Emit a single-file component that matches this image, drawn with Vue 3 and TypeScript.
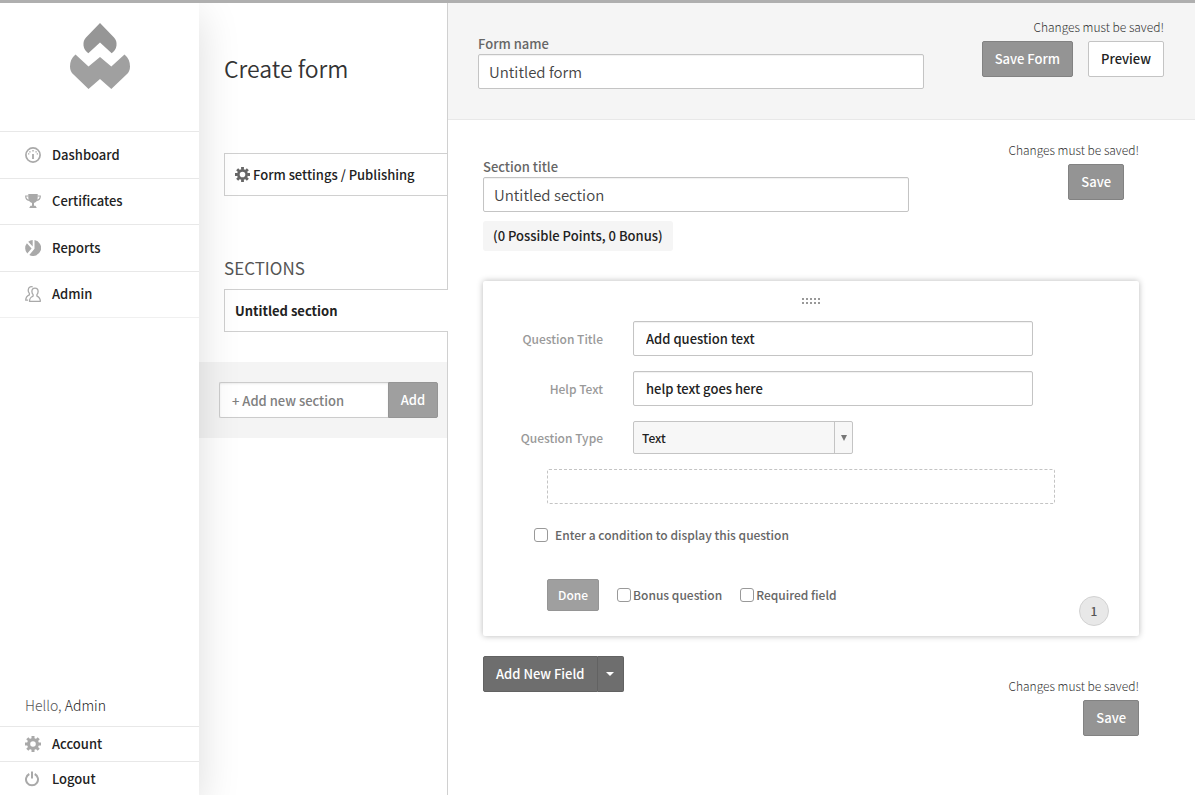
<script setup lang="ts">
import { ref } from 'vue'

interface NavItem {
  label: string
  icon: 'gauge' | 'trophy' | 'pie' | 'users'
}

const navItems: NavItem[] = [
  { label: 'Dashboard', icon: 'gauge' },
  { label: 'Certificates', icon: 'trophy' },
  { label: 'Reports', icon: 'pie' },
  { label: 'Admin', icon: 'users' },
]

const formName = ref('Untitled form')
const sectionTitle = ref('Untitled section')
const newSection = ref('')
const questionTitle = ref('Add question text')
const helpText = ref('help text goes here')
const questionType = ref('Text')
const questionTypes: string[] = ['Text', 'Number', 'Date', 'Dropdown']
const hasCondition = ref(false)
const isBonus = ref(false)
const isRequired = ref(false)
</script>

<template>
  <div class="page">
    <aside class="sidebar">
      <div class="brand">
        <svg class="logo" viewBox="0 0 60 66" aria-label="Home" role="img">
          <path fill="#969696" d="M30 0 44 14.5Q47 17.500 46.500 22.500Q46 27 41.700 30.300L30 19.500 18.300 30.300Q14 27 13.500 22.500Q13 17.500 16 14.500Z" />
          <path fill="#a0a0a0" d="M5.500 31.500 18.500 43.500 30 34 41.300 43.500 54.500 31.500Q60 36 60 43.500Q60 48.500 56.500 51.500L41.300 66 30 56 18.500 66 3.500 51.500Q0 48.500 0 43.500Q0 36 5.500 31.500Z" />
        </svg>
      </div>
      <nav class="nav">
        <a v-for="item in navItems" :key="item.label" href="#" class="nav-link">
          <svg class="icon" viewBox="0 0 16 16" aria-hidden="true">
            <template v-if="item.icon === 'gauge'">
              <circle cx="8" cy="8" r="7.100" fill="none" stroke="currentColor" stroke-width="1.700" />
              <path fill="currentColor" d="M7.100 7h1.800v5H7.100zM7.300 3h1.400v1.500H7.300zM4.200 4.200h1.400v1.400H4.200zM10.400 4.200h1.400v1.400h-1.400zM3 6.300h1.300v1.300H3zM11.700 6.300H13v1.300h-1.300z" />
            </template>
            <template v-else-if="item.icon === 'trophy'">
              <path fill="currentColor" d="M3.300 1h9.400v3.500c0 3.300-1.500 4.800-3.700 5.500v2.800h1.500l1.300 2.200H4.200l1.300-2.200H7V10C4.800 9.300 3.300 7.800 3.300 4.500z" />
              <path fill="none" stroke="currentColor" stroke-width="1.200" d="M3.500 3H.700c0 2.700 1.300 4 3.500 4.300M12.500 3h2.800c0 2.700-1.300 4-3.500 4.300" />
            </template>
            <template v-else-if="item.icon === 'pie'">
              <path fill="currentColor" d="M9.500.100A8 8 0 1 1 4.300 15L9.500 8.800zM7.700 0v6.500L3.200 1.700A8 8 0 0 1 7.700 0zM1.900 3.200 6.600 8.600 2.300 13.600A8 8 0 0 1 1.900 3.200z" />
            </template>
            <template v-else>
              <path fill="none" stroke="currentColor" stroke-width="1.300" stroke-linejoin="round" d="M10 2.100c-2 0-3.100 1.400-3.100 3.400 0 1.300.500 2.400 1.200 3.100v1.500c-2.300.900-3.400 1.600-3.600 5.200h10.900c-.200-3.600-1.300-4.300-3.500-5.200V8.600c.700-.700 1.200-1.800 1.200-3.100 0-2-1.100-3.400-3.100-3.400z" />
              <path fill="none" stroke="currentColor" stroke-width="1.300" stroke-linejoin="round" d="M7.700 1C6.900.500 3.200.300 3.200 4.200c0 1.400.500 2.500 1.200 3.200v1.500C2 9.900.800 10.800.700 14.200h2.400" />
            </template>
          </svg>
          <span>{{ item.label }}</span>
        </a>
      </nav>
      <div class="account">
        <p class="hello">Hello, <a href="#">Admin</a></p>
        <a href="#" class="account-link">
          <svg class="icon" viewBox="0 0 16 16" aria-hidden="true">
            <circle cx="8" cy="8" r="4.400" fill="none" stroke="currentColor" stroke-width="3.200" />
            <path stroke="currentColor" stroke-width="3" d="M8 0v3M8 13v3M0 8h3M13 8h3M2.300 2.300l2.200 2.200M11.500 11.500l2.200 2.200M2.300 13.700l2.200-2.200M11.500 4.500l2.200-2.200" />
          </svg>
          <span>Account</span>
        </a>
        <a href="#" class="account-link">
          <svg class="icon" viewBox="0 0 16 16" aria-hidden="true">
            <path fill="none" stroke="currentColor" stroke-width="2" d="M4.300 3A6 6 0 1 0 9.700 3M7 .500v7" />
          </svg>
          <span>Logout</span>
        </a>
      </div>
    </aside>

    <section class="outline">
      <h1 class="outline-title">Create form</h1>
      <a href="#" class="tab settings-tab">
        <svg class="gear" viewBox="0 0 16 16" aria-hidden="true">
          <circle cx="8" cy="8" r="4.400" fill="none" stroke="currentColor" stroke-width="2.800" />
          <path stroke="currentColor" stroke-width="3" d="M8 0v3M8 13v3M0 8h3M13 8h3M2.300 2.300l2.200 2.200M11.500 11.500l2.200 2.200M2.300 13.700l2.200-2.200M11.500 4.500l2.200-2.200" />
        </svg>
        <span>Form settings / Publishing</span>
      </a>
      <h2 class="outline-heading">SECTIONS</h2>
      <a href="#" class="tab current-tab">Untitled section</a>
      <form class="add-section" @submit.prevent>
        <input v-model="newSection" type="text" class="add-input" placeholder="+ Add new section" aria-label="Add new section" />
        <button type="submit" class="add-button">Add</button>
      </form>
    </section>

    <main class="editor">
      <header class="form-header">
        <div class="form-field">
          <label for="form-name">Form name</label>
          <input id="form-name" v-model="formName" type="text" class="text-input large-input" />
        </div>
        <div class="actions">
          <p class="notice">Changes must be saved!</p>
          <div class="button-row">
            <button type="button" class="button primary">Save Form</button>
            <button type="button" class="button plain">Preview</button>
          </div>
        </div>
      </header>

      <div class="section">
        <div class="section-header">
          <div class="section-field">
            <label for="section-title">Section title</label>
            <input id="section-title" v-model="sectionTitle" type="text" class="text-input large-input" />
            <p class="points">(0 Possible Points, 0 Bonus)</p>
          </div>
          <div class="actions section-actions">
            <p class="notice">Changes must be saved!</p>
            <button type="button" class="button primary inset">Save</button>
          </div>
        </div>

        <article class="card">
          <svg class="handle" viewBox="0 0 18 6" aria-hidden="true">
            <path stroke="#999" stroke-width="2" stroke-dasharray="2 2" d="M0 1h18M0 5h18" />
          </svg>
          <div class="row">
            <label for="question-title">Question Title</label>
            <input id="question-title" v-model="questionTitle" type="text" class="text-input" />
          </div>
          <div class="row">
            <label for="help-text">Help Text</label>
            <input id="help-text" v-model="helpText" type="text" class="text-input" />
          </div>
          <div class="row select-row">
            <label for="question-type">Question Type</label>
            <div class="select">
              <select id="question-type" v-model="questionType">
                <option v-for="type in questionTypes" :key="type">{{ type }}</option>
              </select>
              <span class="select-arrow" aria-hidden="true">
                <svg viewBox="0 0 6 6"><path fill="#777" d="M0 0h6L3 6z" /></svg>
              </span>
            </div>
          </div>
          <div class="answer"></div>
          <label class="check condition">
            <input v-model="hasCondition" type="checkbox" />
            <span>Enter a condition to display this question</span>
          </label>
          <div class="card-footer">
            <button type="button" class="button done">Done</button>
            <label class="check">
              <input v-model="isBonus" type="checkbox" />
              <span>Bonus question</span>
            </label>
            <label class="check">
              <input v-model="isRequired" type="checkbox" />
              <span>Required field</span>
            </label>
          </div>
          <span class="count">1</span>
        </article>

        <div class="section-footer">
          <div class="split">
            <button type="button" class="button dark">Add New Field</button>
            <button type="button" class="button dark caret" aria-label="More field types">
              <svg viewBox="0 0 8 4" aria-hidden="true"><path fill="#fff" d="M0 0h8L4 4z" /></svg>
            </button>
          </div>
          <div class="actions bottom-actions">
            <p class="notice">Changes must be saved!</p>
            <button type="button" class="button primary">Save</button>
          </div>
        </div>
      </div>
    </main>
  </div>
</template>

<style>
body {
  margin: 0;
  background: #fff;
}
</style>

<style scoped>
.page,
.page * {
  box-sizing: border-box;
}

.page {
  display: grid;
  grid-template-columns: 199px 249px minmax(0, 1fr);
  min-height: 100vh;
  border-top: 3px solid #afafaf;
  overflow: hidden;
  color: #222;
  font-family: "Noto Sans CJK SC", "Open Sans", sans-serif;
  font-size: 13px;
  font-weight: 500;
  line-height: 20px;
}

h1, h2, p {
  margin: 0;
}

a {
  color: inherit;
  text-decoration: none;
}

input, select, button {
  font: inherit;
  color: inherit;
}

/* Sidebar */
.sidebar {
  position: relative;
  z-index: 2;
  display: flex;
  flex-direction: column;
  background: #fff;
  box-shadow: 0 12px 40px rgba(0, 0, 0, 0.14);
}

.brand {
  display: flex;
  justify-content: center;
  height: 128px;
  padding-top: 20px;
}

.logo {
  width: 60px;
  height: 66px;
}

.nav {
  display: grid;
  grid-auto-rows: 1fr;
  height: 187px;
  border-bottom: 1px solid #f0f0f0;
}

.nav-link,
.account-link {
  display: flex;
  align-items: center;
  gap: 11px;
  padding-left: 25px;
  border-top: 1px solid #e8e8e8;
}

.icon {
  width: 16px;
  height: 16px;
  color: #a9a9a9;
}

.account {
  margin-top: auto;
  margin-bottom: -1px;
}

.hello {
  padding: 0 25px 11px;
  color: #555;
  font-size: 14px;
  font-weight: 300;
}

.hello a {
  color: #222;
}

.account-link {
  height: 35px;
}

/* Outline column */
.outline {
  border-right: 1px solid #d0d0d0;
}

.outline-title {
  margin: 49px 0 69px 25px;
  color: #333;
  font-size: 23px;
  font-weight: 350;
  line-height: 32px;
}

.tab {
  display: flex;
  align-items: center;
  height: 43px;
  margin-left: 25px;
  padding-left: 10px;
  border: 1px solid #d0d0d0;
  border-right: 0;
}

.gear {
  width: 15px;
  height: 15px;
  margin-right: 3px;
  color: #666;
}

.outline-heading {
  margin: 61px 0 11px 25px;
  color: #555;
  font-size: 17px;
  font-weight: 400;
  line-height: 21px;
}

.current-tab {
  position: relative;
  margin-right: -1px;
  background: #fff;
  font-weight: 700;
}

.add-section {
  display: flex;
  margin-top: 30px;
  padding: 20px 9px 20px 20px;
  background: #f4f4f4;
}

.add-input {
  flex: 1;
  min-width: 0;
  height: 36px;
  padding: 0 12px;
  border: 1px solid #ccc;
  border-right: 0;
  border-radius: 2px 0 0 2px;
  background: #fff;
  box-shadow: inset 0 1px 2px rgba(0, 0, 0, 0.08);
}

.add-input::placeholder {
  color: #808080;
  opacity: 1;
}

.add-button {
  width: 50px;
  height: 36px;
  padding: 0;
  border: 1px solid #959595;
  border-radius: 0 2px 2px 0;
  background: #9f9f9f;
  color: #fff;
}

/* Editor */
.form-header {
  display: flex;
  justify-content: space-between;
  align-items: flex-start;
  height: 117px;
  padding: 0 31px 0 30px;
  border-bottom: 1px solid #e8e8e8;
  background: #f5f5f5;
}

.form-field {
  width: 65%;
  padding-top: 31px;
}

.form-field label,
.section-field label {
  display: block;
  color: #666;
}

.text-input {
  display: block;
  width: 100%;
  height: 35px;
  padding: 0 12px;
  border: 1px solid #c4c4c4;
  border-radius: 2px;
  background: #fff;
  box-shadow: inset 0 1px 1px rgba(0, 0, 0, 0.06);
}

.large-input {
  padding: 0 10px;
  color: #444;
  font-size: 15px;
  font-weight: 350;
}

.actions {
  display: flex;
  flex-direction: column;
  align-items: flex-end;
  gap: 5px;
  padding-top: 15px;
}

.notice {
  color: #333;
  font-size: 12px;
  font-weight: 300;
  line-height: 18px;
}

.button-row {
  display: flex;
  gap: 15px;
}

.button {
  height: 36px;
  padding: 0 12px;
  border: 1px solid #828282;
  border-radius: 2px;
  color: #fff;
}

.primary {
  background: #949494;
}

.plain {
  border-color: #c4c4c4;
  background: #fff;
  color: #222;
}

.section {
  padding: 0 56px 0 35px;
}

.section-header,
.section-footer {
  display: flex;
  justify-content: space-between;
  align-items: flex-start;
}

.section-field {
  width: 65%;
  padding-top: 37px;
}

.section-actions {
  padding-top: 21px;
}

.inset {
  margin-right: 15px;
}

.points {
  width: fit-content;
  margin-top: 9px;
  padding: 5px 10px;
  border-radius: 3px;
  background: #f5f5f5;
}

.card {
  position: relative;
  display: flex;
  flex-direction: column;
  gap: 15px;
  margin-top: 30px;
  padding: 17px 0 25px;
  border-radius: 2px;
  background: #fff;
  box-shadow: 0 0 6px rgba(0, 0, 0, 0.28);
}

.handle {
  align-self: center;
  width: 18px;
  height: 6px;
  margin-bottom: 2px;
}

.row {
  display: grid;
  grid-template-columns: 120px 61%;
  column-gap: 30px;
  align-items: center;
  height: 35px;
}

.row label {
  color: #999;
  font-size: 12px;
  text-align: right;
}

.select-row {
  height: 33px;
}

.select {
  position: relative;
  width: 220px;
  height: 33px;
}

.select select {
  width: 100%;
  height: 100%;
  padding: 0 30px 0 8px;
  border: 1px solid #c4c4c4;
  border-radius: 2px;
  background: #f7f7f7;
  font-size: 12px;
  appearance: none;
}

.select-arrow {
  position: absolute;
  top: 1px;
  right: 1px;
  bottom: 1px;
  display: flex;
  align-items: center;
  justify-content: center;
  width: 18px;
  border-left: 1px solid #c4c4c4;
  pointer-events: none;
}

.select-arrow svg {
  width: 6px;
  height: 6px;
}

.answer {
  height: 35px;
  margin: 0 84px 0 64px;
  border: 1px dashed #c4c4c4;
  border-radius: 2px;
}

.check {
  display: flex;
  align-items: center;
  gap: 2px;
  color: #666;
  font-size: 12px;
}

.check input {
  width: 14px;
  height: 14px;
  margin: 0;
  border: 1px solid #999;
  border-radius: 3px;
  background: #fff;
  appearance: none;
}

.check input:checked {
  background: #777;
}

.condition {
  gap: 7px;
  margin: 6px 0 19px 51px;
}

.card-footer {
  display: flex;
  align-items: center;
  padding-left: 64px;
}

.done {
  height: 32px;
  padding: 0 10px;
  border-color: #959595;
  background: #9f9f9f;
  font-size: 12px;
}

.card-footer .check {
  margin-left: 18px;
}

.count {
  position: absolute;
  right: 30px;
  bottom: 10px;
  width: 30px;
  height: 30px;
  border: 1px solid #d2d2d2;
  border-radius: 50%;
  background: #e8e8e8;
  color: #555;
  font-size: 12px;
  line-height: 28px;
  text-align: center;
}

.section-footer {
  padding-top: 20px;
}

.split {
  display: flex;
}

.dark {
  border-color: #626262;
  background: #6e6e6e;
}

.split .dark:first-child {
  border-radius: 2px 0 0 2px;
}

.split .caret {
  display: flex;
  align-items: center;
  justify-content: center;
  width: 26px;
  padding: 0;
  border-left: 0;
  border-radius: 0 2px 2px 0;
}

.caret svg {
  width: 8px;
  height: 4px;
}

.bottom-actions {
  padding-top: 21px;
}
</style>
